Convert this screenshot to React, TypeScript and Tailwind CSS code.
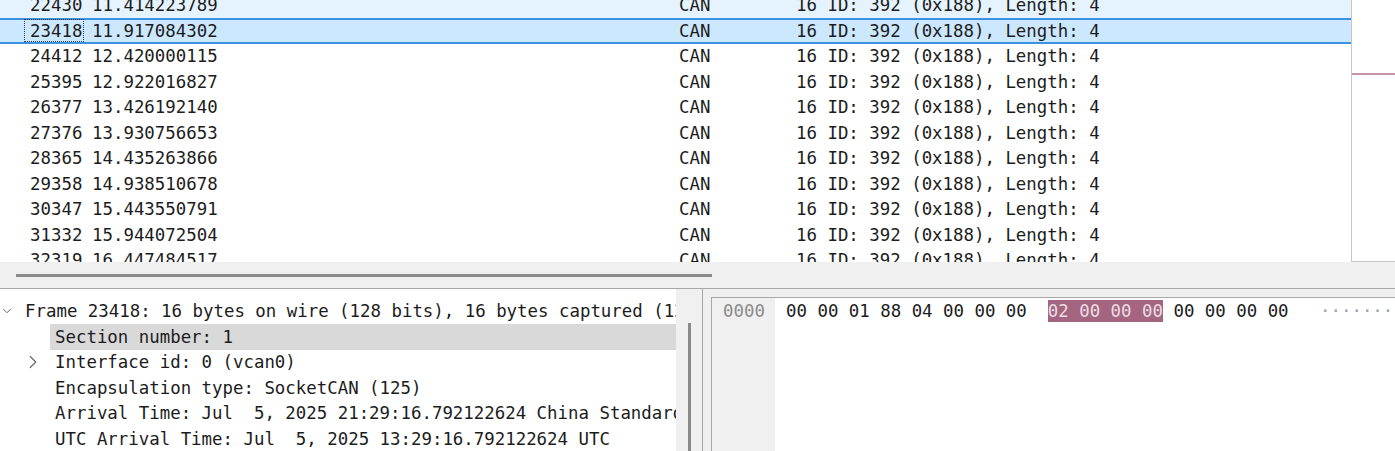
import { ChevronDown, ChevronRight } from 'lucide-react';

const packets = [
  { no: '22430', time: '11.414223789' },
  { no: '23418', time: '11.917084302' },
  { no: '24412', time: '12.420000115' },
  { no: '25395', time: '12.922016827' },
  { no: '26377', time: '13.426192140' },
  { no: '27376', time: '13.930756653' },
  { no: '28365', time: '14.435263866' },
  { no: '29358', time: '14.938510678' },
  { no: '30347', time: '15.443550791' },
  { no: '31332', time: '15.944072504' },
  { no: '32319', time: '16.447484517' },
];

const PacketRow = ({ no, time, index }: { no: string; time: string; index: number }) => {
  const selected = index === 1;
  const hover = index === 0;
  return (
    <div
      className={`h-[25.5px] flex items-center pl-[24px] whitespace-pre ${
        selected
          ? 'bg-[#cce8ff] border-y-2 border-[#3a93e2]'
          : hover
          ? 'bg-[#e5f3ff]'
          : ''
      }`}
    >
      <div className="w-[68px] flex items-center">
        <span
          className={`w-[60px] h-[23px] pl-[5px] flex items-center border border-dotted ${
            selected ? 'border-[#3c3c3c]' : 'border-transparent'
          }`}
        >
          {no}
        </span>
      </div>
      <div className="w-[587px]">{time}</div>
      <div className="w-[117px]">CAN</div>
      <div>16 ID: 392 (0x188), Length: 4</div>
    </div>
  );
};

const DetailRow = ({
  children,
  indent,
  chevron,
  highlight,
}: {
  children: string;
  indent: number;
  chevron?: 'down' | 'right';
  highlight?: boolean;
}) => (
  <div className="h-[25.5px] flex items-center whitespace-pre overflow-hidden">
    <div
      className={`flex items-center justify-end shrink-0 ${
        indent === 0 ? 'w-[20px]' : 'w-[50px]'
      }`}
    >
      {chevron === 'down' && (
        <ChevronDown size={22} strokeWidth={1.4} className="text-[#4a4a4a] mr-[6px]" />
      )}
      {chevron === 'right' && (
        <ChevronRight size={22} strokeWidth={1.4} className="text-[#6e6e6e] mr-[6px]" />
      )}
    </div>
    <div
      className={`h-full flex-1 flex items-center pl-[5px] ${highlight ? 'bg-[#d9d9d9]' : ''}`}
    >
      {children}
    </div>
  </div>
);

export default function App() {
  return (
    <div className="w-[1395px] h-[451px] overflow-hidden bg-white flex flex-col font-['DejaVu_Sans_Mono',monospace] text-[17.4px] text-[#1c1c1c]">
      {/* packet list */}
      <div className="h-[262px] flex shrink-0">
        <div className="w-[1351px] shrink-0 overflow-hidden">
          <div className="-mt-[7.5px]">
            {packets.map((p, i) => (
              <PacketRow key={p.no} no={p.no} time={p.time} index={i} />
            ))}
          </div>
        </div>
        <div className="flex-1 border-l border-b border-[#c6c6c6]">
          <div className="mt-[73px] h-[2px] bg-[#c894ad]" />
        </div>
      </div>

      {/* horizontal scrollbar */}
      <div className="h-[26px] shrink-0 bg-[#f0f0f0] pt-[12px] pl-[16px]">
        <div className="w-[696px] h-[3px] bg-[#8a8a8a]" />
      </div>
      <div className="h-px shrink-0 bg-[#a8a8a8]" />

      {/* bottom panes */}
      <div className="flex-1 flex min-h-0">
        <div className="w-[703px] shrink-0 flex border-r border-[#a8a8a8]">
          <div className="w-[676px] shrink-0 bg-white pt-[9.5px] overflow-hidden">
            <DetailRow indent={0} chevron="down">
              Frame 23418: 16 bytes on wire (128 bits), 16 bytes captured (128 bits) on interface vcan0, id 0
            </DetailRow>
            <DetailRow indent={1} highlight>
              Section number: 1
            </DetailRow>
            <DetailRow indent={1} chevron="right">
              Interface id: 0 (vcan0)
            </DetailRow>
            <DetailRow indent={1}>Encapsulation type: SocketCAN (125)</DetailRow>
            <DetailRow indent={1}>
              Arrival Time: Jul  5, 2025 21:29:16.792122624 China Standard Time
            </DetailRow>
            <DetailRow indent={1}>UTC Arrival Time: Jul  5, 2025 13:29:16.792122624 UTC</DetailRow>
          </div>
          <div className="flex-1 bg-[#f0f0f0] pt-[34px] pl-[12px]">
            <div className="w-[3px] h-full bg-[#8a8a8a]" />
          </div>
        </div>
        <div className="w-[8px] shrink-0 bg-[#f0f0f0]" />
        <div className="flex-1 min-w-0 overflow-hidden bg-[#f0f0f0] pt-[8px] flex flex-col">
          <div className="flex-1 flex border-l border-t border-[#a8a8a8]">
            <div className="w-[63px] shrink-0 pl-[11px] text-[#8c8c8c]">
              <div className="h-[25.5px] flex items-center">0000</div>
            </div>
            <div className="flex-1 min-w-0 bg-white pl-[11px] whitespace-pre overflow-hidden">
              <div className="h-[25.5px] flex items-center">
                <span>00 00 01 88 04 00 00 00  </span>
                <span className="h-[22px] flex items-center bg-[#a3657f] text-[#ecdde5]">
                  02 00 00 00
                </span>
                <span> 00 00 00 00   </span>
                <span className="text-[#9aa4b0]">················</span>
              </div>
            </div>
          </div>
        </div>
      </div>
    </div>
  );
}
